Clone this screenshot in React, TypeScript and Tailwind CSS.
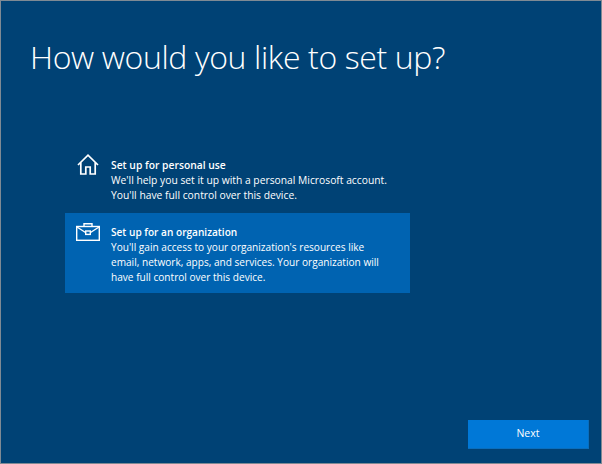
import React from 'react';

const font = "font-['Open_Sans','Noto_Sans',sans-serif]";

const HomeIcon = () => (
  <svg width="22" height="21" viewBox="0 0 22 21" fill="none" stroke="white" strokeWidth="1.7" className="shrink-0">
    <path d="M1 11 L11 1.2 L21 11" />
    <path d="M3.8 8.5 V20 H8.8 V13 H13.2 V20 H18.2 V8.5" />
  </svg>
);

const CaseIcon = () => (
  <svg width="24" height="18" viewBox="0 0 24 18" fill="none" stroke="white" strokeWidth="1.4" className="shrink-0">
    <rect x="0.7" y="3.5" width="22.6" height="13.8" />
    <path d="M8 3.5 V0.8 H16 V3.5" />
    <path d="M1 4 L9.5 9.5 M23 4 L14.5 9.5" />
    <rect x="9.7" y="8" width="4.6" height="3.4" />
  </svg>
);

export default function App() {
  return (
    <div className={`${font} w-[602px] h-[464px] bg-[#004275] border border-[#7f8a94] text-white flex flex-col overflow-hidden`}>
      <h1 className="text-[32px] leading-[40px] font-light pl-[29px] pt-[36px] tracking-[-0.37px]">How would you like to set up?</h1>

      <div className="ml-[64px] mt-[73px] w-[345px] flex flex-col">
        <div className="flex gap-[12px] pl-[12px] h-[63px] pt-[8px]">
          <div className="-mt-[4px]"><HomeIcon /></div>
          <div className="text-[10.3px] leading-[15px]">
            <div className="font-semibold">Set up for personal use</div>
            <div>We'll help you set it up with a personal Microsoft account.</div>
            <div>You'll have full control over this device.</div>
          </div>
        </div>
        <div className="flex gap-[11px] pl-[11px] h-[80px] pt-[12px] bg-[#0063b1]">
          <div className="-mt-[2px]"><CaseIcon /></div>
          <div className="text-[10.1px] leading-[15px]">
            <div className="font-semibold">Set up for an organization</div>
            <div>You'll gain access to your organization's resources like</div>
            <div>email, network, apps, and services. Your organization will</div>
            <div>have full control over this device.</div>
          </div>
        </div>
      </div>

      <div className="mt-auto flex justify-end pr-[12px] pb-[14px]">
        <button className="w-[121px] h-[29px] bg-[#0078d7] border-b border-r border-[#0a6ebd] text-[10.5px] text-white">Next</button>
      </div>
    </div>
  );
}
